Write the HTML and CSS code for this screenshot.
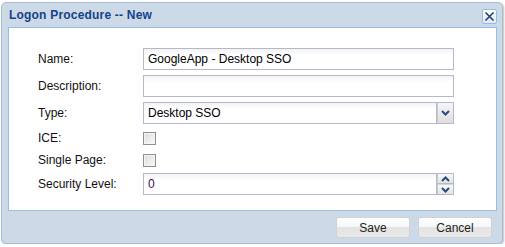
FILE: index.html
```html
<!DOCTYPE html>
<html>
<head>
<title>Logon Procedure -- New</title>
<link rel="stylesheet" href="styles.css">
</head>
<body>
<div class="win">
  <div class="win-header">
    <span class="win-title">Logon Procedure -- New</span>
    <span class="win-close">
      <svg width="11" height="11" viewBox="0 0 11 11"><path d="M1.5 1.5 L9.5 9.5 M9.5 1.5 L1.5 9.5" stroke="#1f3f75" stroke-width="1.6" fill="none"/></svg>
    </span>
  </div>
  <div class="win-body">
    <form class="frm">
      <div class="row">
        <label>Name:</label>
        <div class="field"><input type="text" value="GoogleApp - Desktop SSO"></div>
      </div>
      <div class="row">
        <label>Description:</label>
        <div class="field"><input type="text" value=""></div>
      </div>
      <div class="row">
        <label>Type:</label>
        <div class="field combo">
          <input type="text" value="Desktop SSO" readonly>
          <span class="trigger">
            <svg width="9" height="6" viewBox="0 0 9 6"><path d="M1 1 L4.5 4.5 L8 1" stroke="#2b4a7e" stroke-width="2" fill="none"/></svg>
          </span>
        </div>
      </div>
      <div class="row chk-row">
        <label>ICE:</label>
        <span class="chk"></span>
      </div>
      <div class="row chk-row">
        <label>Single Page:</label>
        <span class="chk"></span>
      </div>
      <div class="row">
        <label>Security Level:</label>
        <div class="field combo">
          <input type="text" value="0" class="num">
          <span class="spin">
            <span class="spin-btn">
              <svg width="9" height="6" viewBox="0 0 9 6"><path d="M1 5 L4.5 1.5 L8 5" stroke="#2b4a7e" stroke-width="2" fill="none"/></svg>
            </span>
            <span class="spin-btn">
              <svg width="9" height="6" viewBox="0 0 9 6"><path d="M1 1 L4.5 4.5 L8 1" stroke="#2b4a7e" stroke-width="2" fill="none"/></svg>
            </span>
          </span>
        </div>
      </div>
    </form>
  </div>
  <div class="win-footer">
    <button type="button" class="btn">Save</button>
    <button type="button" class="btn">Cancel</button>
  </div>
</div>
</body>
</html>
```

FILE: styles.css
```css
* {
  box-sizing: border-box;
}
body {
  margin: 0;
  background: #fff;
  font-family: "Liberation Sans", Arial, sans-serif;
  font-size: 12px;
}
.win {
  margin: 2px 0 0 1px;
  width: 502px;
  height: 242px;
  border: 1px solid #a9bdd6;
  border-radius: 5px;
  background: #ccd9e7;
  box-shadow: 1px 1px 2px rgba(0, 0, 0, 0.25);
  display: flex;
  flex-direction: column;
  padding: 0 4px 0 6px;
}
.win-header {
  height: 24px;
  display: flex;
  align-items: center;
  justify-content: space-between;
  padding: 0 0 1px 1px;
}
.win-title {
  color: #15428b;
  font-weight: bold;
  font-size: 12px;
  letter-spacing: 0.2px;
}
.win-close {
  width: 15px;
  height: 15px;
  margin-top: 3px;
  margin-right: 1px;
  border: 1px solid #99bbe8;
  border-radius: 2px;
  background: linear-gradient(#ffffff, #dfe8f6);
  display: flex;
  align-items: center;
  justify-content: center;
}
.win-body {
  height: 184px;
  background: #fff;
  border: 1px solid #99bbe8;
  margin-right: 1px;
  padding: 20px 42px 0 29px;
}
.row {
  display: flex;
  align-items: center;
  height: 22px;
  margin-bottom: 5px;
}
.row.chk-row {
  height: 18px;
  margin-bottom: 4px;
}
.row label {
  width: 105px;
  color: #111;
  font-size: 12px;
}
.field {
  flex: 1;
  height: 22px;
  display: flex;
}
.field input {
  flex: 1;
  min-width: 0;
  height: 22px;
  margin: 0;
  border: 1px solid #b5b8c8;
  padding: 0 4px 1px;
  font-family: "Liberation Sans", Arial, sans-serif;
  font-size: 12px;
  color: #000;
  background: linear-gradient(#f3f3f3, #ffffff 6px);
  outline: none;
}
.field input.num {
  color: #3a0b55;
}
.trigger {
  width: 17px;
  height: 22px;
  border: 1px solid #b5b8c8;
  border-left: 1px solid #c8cbd6;
  background: linear-gradient(#f6f6f6, #dedede);
  display: flex;
  align-items: center;
  justify-content: center;
}
.spin {
  width: 17px;
  height: 22px;
  display: flex;
  flex-direction: column;
}
.spin-btn {
  flex: 1;
  border: 1px solid #b5b8c8;
  border-left-color: #c8cbd6;
  background: linear-gradient(#f8f8f8, #e4e4e4);
  display: flex;
  align-items: center;
  justify-content: center;
}
.spin-btn + .spin-btn {
  border-top: 1px solid #d4d6de;
}
.chk {
  width: 13px;
  height: 13px;
  border: 1px solid #8f8f8f;
  background: linear-gradient(135deg, #dcdcdc, #fafafa);
  box-shadow: inset 0 0 0 1px #f4f4f4;
}
.win-footer {
  flex: 1;
  display: flex;
  justify-content: flex-end;
  align-items: flex-start;
  gap: 8px;
  padding: 6px 6px 0 0;
}
.btn {
  width: 74px;
  height: 21px;
  border: 1px solid #cfd3d8;
  border-radius: 3px;
  background: linear-gradient(#ffffff 0%, #f7f7f7 45%, #e4e4e4 50%, #e8e8e8 100%);
  font-family: "Liberation Sans", Arial, sans-serif;
  font-size: 12px;
  color: #222;
  padding: 0;
}
```
